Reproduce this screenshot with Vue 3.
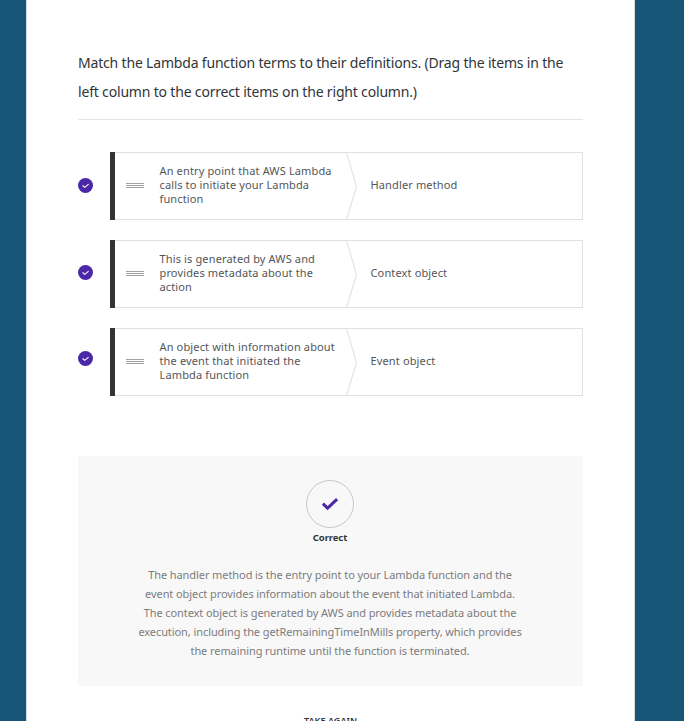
<script setup>
const question = [
  'Match the Lambda function terms to their definitions. (Drag the items in the',
  'left column to the correct items on the right column.)',
]
const pairs = [
  { lines: ['An entry point that AWS Lambda', 'calls to initiate your Lambda', 'function'], match: 'Handler method' },
  { lines: ['This is generated by AWS and', 'provides metadata about the', 'action'], match: 'Context object' },
  { lines: ['An object with information about', 'the event that initiated the', 'Lambda function'], match: 'Event object' },
]
const feedback = [
  'The handler method is the entry point to your Lambda function and the',
  'event object provides information about the event that initiated Lambda.',
  'The context object is generated by AWS and provides metadata about the',
  'execution, including the getRemainingTimeInMills property, which provides',
  'the remaining runtime until the function is terminated.',
]
</script>

<template>
  <div class="page">
    <main class="sheet">
      <h1 class="question">
        <span v-for="line in question" :key="line" class="line">{{ line }}</span>
      </h1>
      <section class="matching">
        <div class="marks">
          <svg v-for="p in pairs" :key="p.match" class="mark" viewBox="0 0 15 15">
            <circle cx="7.5" cy="7.5" r="7.5" fill="#4b28a8" />
            <path d="M4.6 7.5 L6.8 9.4 L10.6 6.2" fill="none" stroke="#fff" stroke-width="1.1" />
          </svg>
        </div>
        <div class="pairs">
          <div v-for="p in pairs" :key="p.match" class="pair">
            <span class="bar" />
            <div class="card">
              <span class="grip"><i /><i /><i /></span>
              <p class="term">
                <span v-for="line in p.lines" :key="line" class="line">{{ line }}</span>
              </p>
              <svg class="chevron" viewBox="0 0 12 68">
                <path d="M0.5 0.5 L10.5 34.5 L0.5 67.5" fill="none" stroke="#e1e1e1" stroke-width="1.1" />
              </svg>
              <p class="match">{{ p.match }}</p>
            </div>
          </div>
        </div>
      </section>
      <section class="feedback">
        <div class="badge">
          <svg viewBox="0 0 18 14" width="18" height="14">
            <path d="M1.9 6.7 L6.6 11.2 L16.1 2.1" fill="none" stroke="#4b28a8" stroke-width="3" />
          </svg>
        </div>
        <h2 class="verdict">Correct</h2>
        <p class="explain">
          <span v-for="line in feedback" :key="line" class="line">{{ line }}</span>
        </p>
      </section>
      <button class="again">TAKE AGAIN</button>
    </main>
  </div>
</template>

<style>
body {
  overflow: hidden;
}
</style>

<style scoped>
.page {
  box-sizing: border-box;
  height: 721px;
  overflow: hidden;
  padding: 0 49px 0 26px;
  background: #185678;
  font-family: 'Noto Sans', 'Open Sans', sans-serif;
}
.sheet {
  box-sizing: border-box;
  height: 721px;
  overflow: hidden;
  padding: 48px 51px 0;
  background: #fff;
  border: solid #d5dde2;
  border-width: 0 1px;
  display: flex;
  flex-direction: column;
}
.line {
  display: block;
  white-space: nowrap;
}
.question {
  flex: none;
  margin: 0;
  height: 71px;
  border-bottom: 1px solid #e5e5e5;
  font-size: 14px;
  font-weight: 400;
  line-height: 29px;
  letter-spacing: -0.18px;
  color: #313537;
}
.matching {
  flex: none;
  display: flex;
  margin-top: 32px;
}
.marks {
  display: flex;
  flex-direction: column;
  gap: 71.5px;
  width: 32px;
  padding-top: 26px;
}
.mark {
  display: block;
  width: 15px;
  height: 15px;
}
.pairs {
  flex: 1;
  display: flex;
  flex-direction: column;
  gap: 20px;
}
.pair {
  height: 68px;
  display: flex;
}
.bar {
  width: 5px;
  background: #313537;
}
.card {
  flex: 1;
  box-sizing: border-box;
  display: flex;
  align-items: center;
  border: 1px solid #e1e1e1;
  border-left: 0;
  font-size: 11px;
  line-height: 14px;
  letter-spacing: 0.14px;
  color: #545658;
}
.grip {
  display: flex;
  flex-direction: column;
  gap: 1px;
  width: 18px;
  margin: 0 15.5px 2px 11px;
}
.grip i {
  height: 1px;
  background: #a3a3a5;
}
.term {
  width: 186.5px;
  margin: 0;
  padding-bottom: 2px;
}
.chevron {
  flex: none;
  width: 12px;
  height: 68px;
}
.match {
  margin: 0 0 0 12.5px;
  padding-bottom: 2px;
}
.feedback {
  flex: none;
  box-sizing: border-box;
  height: 230px;
  margin-top: 60px;
  padding: 24px 1px 0 0;
  background: #f8f8f8;
  display: flex;
  flex-direction: column;
  align-items: center;
}
.badge {
  box-sizing: border-box;
  width: 48px;
  height: 48px;
  border: 1px solid #c8c8c8;
  border-radius: 50%;
  display: flex;
  align-items: center;
  justify-content: center;
}
.verdict {
  margin: 2px 0 0;
  font-size: 9.5px;
  font-weight: 700;
  line-height: 16px;
  letter-spacing: -0.1px;
  color: #313537;
}
.explain {
  margin: 19px 0 0;
  font-size: 11px;
  line-height: 19px;
  letter-spacing: -0.08px;
  text-align: center;
  color: #7c7c7d;
}
.again {
  flex: none;
  align-self: center;
  margin: 27px 0 0;
  padding: 0;
  border: 0;
  background: none;
  font: 600 9px/16px 'Noto Sans', 'Open Sans', sans-serif;
  letter-spacing: 0.05px;
  color: #313537;
}
</style>
